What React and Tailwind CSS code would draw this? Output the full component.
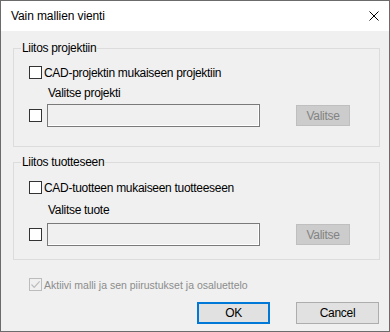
import React from 'react';

const font = { fontFamily: '"Liberation Sans", Arial, sans-serif' };

function Box({ disabled, checked }) {
  return (
    <span
      className={`w-[13px] h-[13px] shrink-0 border flex items-center justify-center ${
        disabled ? 'border-[#bcbcbc] bg-[#f0f0f0]' : 'border-[#333333] bg-white'
      }`}
    >
      {checked && (
        <svg width="11" height="11" viewBox="0 0 11 11" fill="none">
          <path d="M1.5 5.5 L4.2 8.3 L9.6 2.3" stroke="#bcbcbc" strokeWidth="1.2" />
        </svg>
      )}
    </span>
  );
}

function Group({ title, option, pick, cls, rowTop, labelTop, fieldTop }) {
  return (
    <div className={`relative w-[367px] border border-[#dcdcdc] ${cls}`}>
      <span className="absolute left-[7px] top-[-9px] px-[1px] bg-[#f0f0f0] leading-[16px]">{title}</span>
      <div className={`flex items-center h-[13px] pl-[15px] ${rowTop}`}>
        <Box />
        <span className="ml-[2px] leading-[16px]">{option}</span>
      </div>
      <div className={`pl-[34px] leading-[16px] ${labelTop}`}>{pick}</div>
      <div className={`flex items-center h-[23px] pl-[15px] ${fieldTop}`}>
        <Box />
        <div className="ml-[5px] w-[213px] h-[23px] border border-[#7a7a7a] bg-[#f0f0f0] shadow-[inset_-1px_-1px_0_#ffffff]" />
        <button className="ml-[36px] w-[54px] h-[21px] border border-[#bfbfbf] bg-[#cccccc] text-[#838383] leading-[16px]">
          Valitse
        </button>
      </div>
    </div>
  );
}

export default function App() {
  return (
    <div
      className="w-[390px] h-[332px] border border-[#6b6b6b] bg-[#f0f0f0] flex flex-col text-[12px] tracking-[-0.3px] text-black"
      style={font}
    >
      {/* title bar */}
      <div className="h-[30px] bg-white flex items-center justify-between pl-[10px] pr-[10px] shrink-0">
        <span className="leading-[16px] tracking-[-0.1px]">Vain mallien vienti</span>
        <svg width="10" height="10" viewBox="0 0 10 10" fill="none">
          <path d="M0.5 0.5 L9.5 9.5 M9.5 0.5 L0.5 9.5" stroke="#000" strokeWidth="1" />
        </svg>
      </div>

      <div className="flex flex-col pl-[12px] pr-[9px] pt-[17px]">
        <Group
          title="Liitos projektiin"
          option="CAD-projektin mukaiseen projektiin"
          pick="Valitse projekti"
          cls="h-[99px]"
          rowTop="mt-[17px]"
          labelTop="mt-[6px]"
          fieldTop="mt-[3px]"
        />
        <Group
          title="Liitos tuotteseen"
          option="CAD-tuotteen mukaiseen tuotteeseen"
          pick="Valitse tuote"
          cls="h-[98px] mt-[15px]"
          rowTop="mt-[18px]"
          labelTop="mt-[8px]"
          fieldTop="mt-[5px]"
        />

        <div className="flex items-center h-[13px] pl-[16px] mt-[18px]">
          <Box disabled checked />
          <span className="ml-[2px] leading-[16px] text-[10.5px] tracking-[0px] text-[#8c8c8c]">
            Aktiivi malli ja sen piirustukset ja osaluettelo
          </span>
        </div>

        <div className="flex justify-end gap-[26px] mt-[11px] mr-[1px]">
          <button className="w-[73px] h-[22px] border-2 border-[#0078d7] bg-[#e1e1e1] leading-[16px]">OK</button>
          <button className="w-[83px] h-[22px] border border-[#adadad] bg-[#e1e1e1] leading-[16px]">Cancel</button>
        </div>
      </div>
    </div>
  );
}
